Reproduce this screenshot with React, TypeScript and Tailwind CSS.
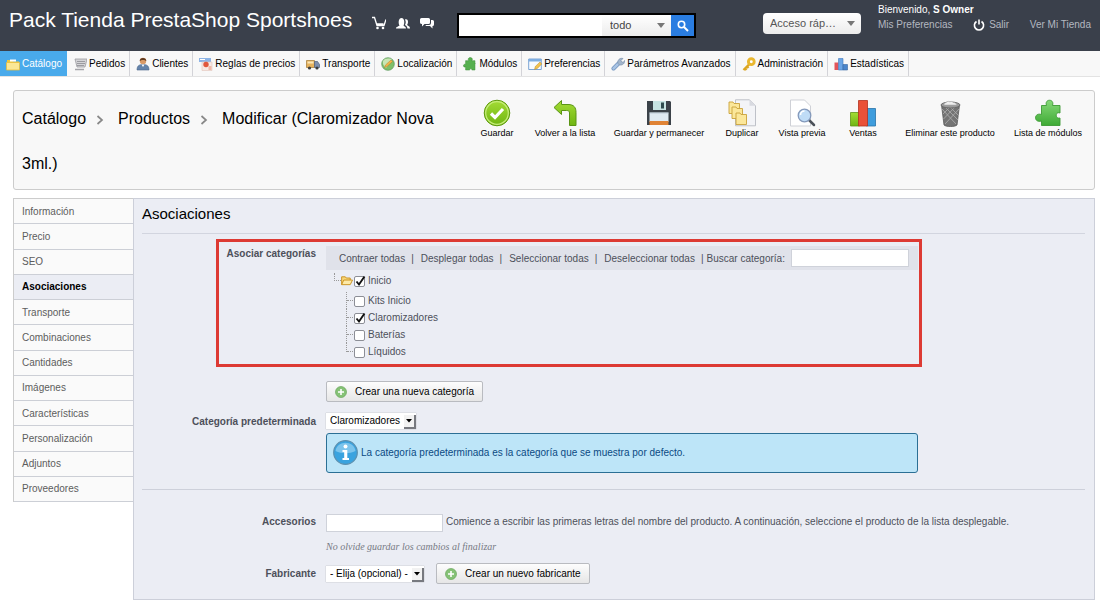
import type { ReactNode } from "react";

type IconName =
  | "folder" | "orders" | "customers" | "rules" | "truck" | "globe"
  | "puzzle" | "prefs" | "wrench" | "key" | "stats";

const PUZZLE = "M11 7c-2-2-1-6 3-6s5 4 3 6h6v6c2-2 0 0 0 0v12h-6c1-3-5-3-4 0H5v-6c-5 2-6-6 0-5V7z";

function NavIcon({ name }: { name: IconName }) {
  const art: Record<IconName, ReactNode> = {
    folder: (
      <>
        <path d="M1 3h5l1 1.500h6V6H1z" fill="#f0c83c" />
        <path d="M.5 5.500h13V13H.500z" fill="#fbe795" stroke="#e9bd3b" strokeWidth=".8" />
        <path d="M4 2.500h6v2H4z" fill="#fff" />
      </>
    ),
    orders: (
      <>
        <path d="M2 2h12l-2 8H4z" fill="#d5d5d8" stroke="#9a9aa0" strokeWidth=".8" />
        <path d="M4 4.500h8M4 6.500h8M4 8.500h7" stroke="#8b8b92" strokeWidth=".8" />
        <path d="M2 12.500h9" stroke="#a5a5aa" strokeWidth="1.500" />
      </>
    ),
    customers: (
      <>
        <circle cx="7" cy="4" r="3.200" fill="#d99a67" />
        <path d="M3.700 4C3.500 0 10.500 0 10.300 4 9 2.500 5 2.500 3.700 4z" fill="#5e3a1f" />
        <path d="M1 13c0-5 3-5.500 6-5.500s6 .5 6 5.500z" fill="#6584ab" stroke="#4a668c" strokeWidth=".6" />
        <path d="M5.500 7.500 7 10l1.500-2.500z" fill="#fff" />
      </>
    ),
    rules: (
      <>
        <path d="M0 1h12v4H0z" fill="#8db4e6" />
        <path d="M1 2.500h5" stroke="#fff" strokeWidth="1" />
        <path d="M3 5h10v8.500H3z" fill="#f7e9e4" stroke="#e3c4ba" strokeWidth=".6" />
        <circle cx="7" cy="7.500" r="2.700" fill="#e0573d" />
        <path d="M9.500 9h3v4h-3z" fill="#f1b9a8" />
      </>
    ),
    truck: (
      <>
        <path d="M.5 3.500h8v7h-8z" fill="#e6b25d" stroke="#a47832" strokeWidth=".7" />
        <path d="M1.500 4.500h6v2h-6z" fill="#fbe6b8" />
        <path d="M8.500 4.500h3l2 3v3h-5z" fill="#7d8fae" stroke="#4e5f7d" strokeWidth=".7" />
        <circle cx="3.500" cy="11" r="1.600" fill="#3c3c3c" />
        <circle cx="11" cy="11" r="1.600" fill="#3c3c3c" />
      </>
    ),
    globe: (
      <>
        <circle cx="7" cy="7" r="6.300" fill="#7fbf6b" stroke="#5b9a5f" strokeWidth=".7" />
        <path d="M2 4c2-3 7-3 9-1L5 11C2 9 1.500 6 2 4z" fill="#c8e6b5" />
        <path d="m3.500 10.500 1-2.500 5.500-5 1.500 1.500-5.500 5z" fill="#f2b54a" stroke="#b47b26" strokeWidth=".5" />
      </>
    ),
    puzzle: (
      <path d={PUZZLE} transform="scale(.52)" fill="#56b04f" stroke="#3d8e39" strokeWidth="1" />
    ),
    prefs: (
      <>
        <path d="M.7 2h12.600v10.500H.700z" fill="#f8fbff" stroke="#6d9bd0" strokeWidth=".9" />
        <path d="M.7 2h12.600v2.500H.700z" fill="#7eaee2" />
        <path d="m6.500 12.500.8-3 4.700-4.500 1.800 1.900-4.500 4.600z" fill="#f3c34e" stroke="#b98a2b" strokeWidth=".5" />
      </>
    ),
    wrench: (
      <>
        <path d="M2.500 11.500 8 6" stroke="#6f91bd" strokeWidth="4" strokeLinecap="round" />
        <path d="M2.500 11.500 8 6" stroke="#a8c3e3" strokeWidth="2.500" strokeLinecap="round" />
        <path d="M7 6.500C6 3 9 .5 12 1.500L10 3.500l.8 1.500 1.700.200 1-1.700c.5 3-2 5-5 4.500z" fill="#a3b6cc" stroke="#7188a5" strokeWidth=".6" />
      </>
    ),
    key: (
      <>
        <path d="M8 6.500 1.500 13M3 11.500l1.500 1.500M5 9.500 6.500 11" stroke="#dba520" strokeWidth="2.400" />
        <circle cx="9.300" cy="4.700" r="2.900" fill="#fff" stroke="#e9b72f" strokeWidth="2.900" />
      </>
    ),
    stats: (
      <>
        <path d="M.5 5.500h4V13h-4z" fill="#e2555a" />
        <path d="M4.500 1.500h4.500V13H4.500z" fill="#6aa5e6" stroke="#3f78bd" strokeWidth=".6" />
        <path d="M9 7.500h4.500V13H9z" fill="#4a86cc" stroke="#35659f" strokeWidth=".6" />
      </>
    ),
  };
  return (
    <svg viewBox="0 0 14 14" className="size-3.5 shrink-0" aria-hidden="true">
      {art[name]}
    </svg>
  );
}

const nav: { label: string; icon: IconName }[] = [
  { label: "Catálogo", icon: "folder" },
  { label: "Pedidos", icon: "orders" },
  { label: "Clientes", icon: "customers" },
  { label: "Reglas de precios", icon: "rules" },
  { label: "Transporte", icon: "truck" },
  { label: "Localización", icon: "globe" },
  { label: "Módulos", icon: "puzzle" },
  { label: "Preferencias", icon: "prefs" },
  { label: "Parámetros Avanzados", icon: "wrench" },
  { label: "Administración", icon: "key" },
  { label: "Estadísticas", icon: "stats" },
];

const sheet = "M0 0h14l6 6v20H0z";

const actions: { label: string; width: string; art: ReactNode }[] = [
  {
    label: "Guardar",
    width: "w-[50px]",
    art: (
      <>
        <circle cx="14" cy="14" r="12.800" fill="url(#lime)" stroke="#5f9a10" strokeWidth="1" />
        <circle cx="14" cy="14" r="11.300" fill="none" stroke="#c5ec7a" strokeWidth="1.200" />
        <path d="m8 14.500 4 4 8-8.500" fill="none" stroke="#fff" strokeWidth="3.200" />
      </>
    ),
  },
  {
    label: "Volver a la lista",
    width: "w-[86px]",
    art: (
      <path d="M3 8.500 10.500 1.500v4H17c6 0 8 3 8 8V26.500h-6.500V14c0-2-1-2.500-3-2.500h-5v4z" fill="url(#lime)" stroke="#5a9414" strokeWidth="1" />
    ),
  },
  {
    label: "Guardar y permanecer",
    width: "w-[102px]",
    art: (
      <>
        <path d="M2 2h23l1 1v23H2z" fill="#3b4249" />
        <path d="M8 2h13v9H8z" fill="#c7e3e2" />
        <path d="M16 3.500h3v6h-3z" fill="#2d4a4d" />
        <path d="M4.500 13.500h19V23h-19z" fill="#dfeaf2" />
        <path d="M4.500 14h19" stroke="#b5c4cf" strokeWidth=".8" />
        <path d="M4.500 22h19V26h-19z" fill="#e08335" />
      </>
    ),
  },
  {
    label: "Duplicar",
    width: "w-16",
    art: (
      <>
        <path d={sheet} transform="translate(7.500 .8)" fill="#f3f4f7" stroke="#b8bbc2" strokeWidth=".9" />
        <path d="M21.500.800v6h6z" fill="#d8dae0" />
        {[[1, 3], [4, 8], [8, 14]].map(([x, y]) => (
          <path key={x} d="M0 0h4l1 1.500h5.500v10H0z" transform={`translate(${x} ${y})`} fill="#fbe79a" stroke="#c9a23a" strokeWidth=".9" />
        ))}
      </>
    ),
  },
  {
    label: "Vista previa",
    width: "w-14",
    art: (
      <>
        <path d={sheet} transform="translate(2.500 1)" fill="#fff" stroke="#c9ccd2" strokeWidth=".9" />
        <path d="m21 21 5 5" stroke="#4c5159" strokeWidth="2.500" strokeLinecap="round" />
        <circle cx="16.500" cy="16.500" r="6.300" fill="#bfdcf6" stroke="#8499bb" strokeWidth="1.300" />
        <path d="M12.500 16a4 4 0 0 1 4-4" fill="none" stroke="#fff" strokeWidth="1.600" />
      </>
    ),
  },
  {
    label: "Ventas",
    width: "w-[66px]",
    art: (
      <>
        <path d="M1.500 13.500h9V27h-9z" fill="url(#lime)" stroke="#5f9318" strokeWidth=".8" />
        <path d="M17.500 9.500h9V27h-9z" fill="#3f9ddd" stroke="#2873a8" strokeWidth=".8" />
        <path d="M9.500 1.500h9V27h-9z" fill="#ea5138" stroke="#b3321f" strokeWidth=".8" />
      </>
    ),
  },
  {
    label: "Eliminar este producto",
    width: "w-[108px]",
    art: (
      <>
        <path d="M5.500 6h18l-2.500 20c-2 2-11 2-13 0z" fill="#747474" stroke="#5b5b5b" strokeWidth=".8" />
        <path d="m6 10 14 15M9 8l13 13M14 8l9 9M23 10 9 25M19 8 7.500 20M14 8l-7 7" stroke="#b0b0b0" strokeWidth=".8" />
        <ellipse cx="14.500" cy="6" rx="9.500" ry="3" fill="#9a9a9a" stroke="#666" strokeWidth=".9" />
        <path d="M8 6c0-3 3-2 4-4 2 2 4-1 5 1.500 2 0 4 1 3.500 2.500z" fill="#efefef" stroke="#aaa" strokeWidth=".6" />
      </>
    ),
  },
  {
    label: "Lista de módulos",
    width: "w-[88px]",
    art: (
      <path d="M7.500 6.500h5c-2.500-7 8.500-7 6 0h7.500v7.500c-5-2-5 6.500 0 5V26.500h-18.500V22c-8 2.500-8-9 0-6.500z" fill="url(#leaf)" stroke="#3c9a34" strokeWidth=".9" />
    ),
  },
];

const tabs = [
  "Información", "Precio", "SEO", "Asociaciones", "Transporte", "Combinaciones",
  "Cantidades", "Imágenes", "Características", "Personalización", "Adjuntos", "Proveedores",
];

const children = [
  { label: "Kits Inicio", checked: false },
  { label: "Claromizadores", checked: true },
  { label: "Baterías", checked: false },
  { label: "Líquidos", checked: false },
];

function Tick({ label, checked }: { label: string; checked: boolean }) {
  return (
    <label className="flex items-center gap-[3px]">
      <span className="relative flex pt-0.5">
        <input
          type="checkbox"
          defaultChecked={checked}
          className="peer size-[11px] appearance-none rounded-[2px] border border-[#8c8e96] bg-white"
        />
        <svg viewBox="0 0 12 12" className="pointer-events-none absolute top-px left-0 hidden size-3 peer-checked:block" aria-hidden="true">
          <path d="m2.500 6.500 2.500 3L10.500 1.500" fill="none" stroke="#111" strokeWidth="1.900" />
        </svg>
      </span>
      {label}
    </label>
  );
}

function OldSelect({ id, option, width }: { id: string; option: string; width: string }) {
  return (
    <span className={`relative flex ${width}`}>
      <select id={id} className="h-4 w-full appearance-none bg-white pl-1 text-[10px] leading-4 text-black shadow-[0_0_1px_#999]">
        <option>{option}</option>
      </select>
      <span className="pointer-events-none absolute right-0 bottom-0 flex h-3.5 w-3 items-center justify-center border-r-2 border-b-2 border-[#77797f] bg-[#f2f2f2]">
        <svg viewBox="0 0 6 4" className="h-1 w-1.5" aria-hidden="true"><path d="M0 0h6L3 3.500z" fill="#000" /></svg>
      </span>
    </span>
  );
}

function AddButton({ children: text }: { children: ReactNode }) {
  return (
    <button type="button" className="flex h-[21px] items-center gap-2 rounded-[2px] border border-[#b9bbc0] bg-linear-to-b from-[#fdfdfd] to-[#e6e6e6] px-2 text-[10px] text-black">
      <svg viewBox="0 0 12 12" className="size-3" aria-hidden="true">
        <circle cx="6" cy="6" r="5.500" fill="#86c276" stroke="#6aa85c" strokeWidth=".7" />
        <path d="M6 3v6M3 6h6" stroke="#fff" strokeWidth="1.600" />
      </svg>
      {text}
    </button>
  );
}

function Chevron() {
  return (
    <svg viewBox="0 0 8 10" className="mr-3.5 ml-2.5 inline h-2.5 w-2" aria-hidden="true">
      <path d="m1.500 1 4.500 4-4.500 4" fill="none" stroke="#888" strokeWidth="1.700" />
    </svg>
  );
}

const label = "shrink-0 pr-2.5 text-right font-bold text-[#4d505a]";
const field = "border border-[#cfd2da] bg-white px-1 text-[10px]";

export default function App() {
  return (
    <div className="min-h-screen bg-white font-['Liberation_Sans',Arial,sans-serif] text-[10px] leading-[15px] text-[#4d505a]">
      <svg className="absolute size-0" aria-hidden="true">
        <defs>
          <linearGradient id="lime" x1="0" y1="0" x2="0" y2="1">
            <stop offset="0" stopColor="#a4dc35" />
            <stop offset="1" stopColor="#6fb512" />
          </linearGradient>
          <linearGradient id="leaf" x1="0" y1="0" x2="0" y2="1">
            <stop offset="0" stopColor="#86d978" />
            <stop offset="1" stopColor="#3eaa35" />
          </linearGradient>
        </defs>
      </svg>

      <header className="flex h-[51px] items-start bg-[#3a404b] pr-[9px] pl-[9px] text-white">
        <h1 className="w-[363px] pt-2 text-[21px] leading-6 whitespace-nowrap">Pack Tienda PrestaShop Sportshoes</h1>
        <div className="flex w-[85px] gap-2.5 pt-4">
          <button type="button" aria-label="Pedidos nuevos">
            <svg viewBox="0 0 14 14" className="size-3.5"><path d="M0 1.500h2.500l2.500 8h7l2-6M4 8h7.500" fill="none" stroke="#fff" strokeWidth="1.300" /><circle cx="5.500" cy="12" r="1.300" fill="#fff" /><circle cx="11" cy="12" r="1.300" fill="#fff" /></svg>
          </button>
          <button type="button" aria-label="Clientes nuevos">
            <svg viewBox="0 0 14 14" className="size-3.5"><path d="M0 12.500c0-2 3-2 3.500-3C2 7 2.500 2 5.500 2S9 7 7.500 9.500c.5 1 2.500 1 2.500 3zM9 3.500c3-1.500 4 3 2 5.500 1 1 3 1 3 3.500h-2.500C11 10 10 9.500 9 9c1-2 1-3.500 0-5.500z" fill="#fff" /></svg>
          </button>
          <button type="button" aria-label="Mensajes nuevos">
            <svg viewBox="0 0 14 14" className="size-3.5"><path d="M1.500 2h7Q10 2 10 3.500v3Q10 8 8.500 8H4.500L2 10.500V8Q0 8 0 6.500v-3Q0 2 1.500 2z" fill="#fff" /><path d="M11 4h1.500Q14 4 14 5.500v3Q14 10 12.500 10v2.500L10 10H6.500Q5.500 10 5.500 9H9q2 0 2-2z" fill="#fff" /></svg>
          </button>
        </div>
        <form className="mt-[13px] flex h-[25px] w-[239px] border-2 border-black bg-white" onSubmit={(e) => e.preventDefault()}>
          <input type="search" aria-label="Buscar" className="w-0 grow px-1 text-[11px] text-black" />
          <span className="relative flex w-[69px]">
            <select aria-label="Buscar en" className="w-full appearance-none bg-linear-to-b from-white to-[#ececec] pl-2 text-[11px] text-[#444]">
              <option>todo</option>
            </select>
            <svg viewBox="0 0 8 5" className="pointer-events-none absolute top-2 right-1.5 h-[5px] w-2"><path d="M0 0h8L4 5z" fill="#777" /></svg>
          </span>
          <button type="submit" aria-label="Iniciar búsqueda" className="flex w-[23px] items-center justify-center bg-[#2a7de1]">
            <svg viewBox="0 0 12 12" className="size-3"><circle cx="4.500" cy="4.500" r="3.200" fill="none" stroke="#fff" strokeWidth="1.600" /><path d="m7 7 4 4" stroke="#fff" strokeWidth="2" /></svg>
          </button>
        </form>
        <span className="relative mt-[13px] ml-auto flex w-[98px]">
          <select aria-label="Acceso rápido" className="h-[21px] w-full appearance-none rounded bg-linear-to-b from-white to-[#ececec] pl-[7px] text-[11px] text-[#555]">
            <option>Acceso ráp…</option>
          </select>
          <svg viewBox="0 0 8 5" className="pointer-events-none absolute top-2 right-1.5 h-[5px] w-2"><path d="M0 0h8L4 5z" fill="#777" /></svg>
        </span>
        <div className="ml-[17px] w-[213px] pt-[3px]">
          <p className="leading-[14px]">Bienvenido, <strong>S Owner</strong></p>
          <div className="flex items-center justify-between text-[#b4b8c0]">
            <a href="#preferencias">Mis Preferencias</a>
            <a href="#salir" className="flex items-center gap-1">
              <svg viewBox="0 0 12 12" className="size-3"><path d="M3.500 2.500a4.600 4.600 0 1 0 5 0M6 .5v5" fill="none" stroke="#fff" strokeWidth="1.600" /></svg>
              Salir
            </a>
            <a href="#tienda">Ver Mi Tienda</a>
          </div>
        </div>
      </header>

      <nav className="flex h-[26px] border-b border-[#e3e3e3] bg-[#f8f8f8]">
        {nav.map(({ label: text, icon }, i) => (
          <a
            key={text}
            href="#menu"
            className={`flex items-center gap-0.5 border-r pr-1 pl-1.5 whitespace-nowrap ${i === 0 ? "border-[#49aaeb] bg-[#49aaeb] text-white" : "border-[#d3d3d8] text-black"}`}
          >
            <NavIcon name={icon} />
            {text}
          </a>
        ))}
      </nav>

      <div className="pt-[13px] pr-[5px] pb-3 pl-[13px]">
        <section className="flex min-h-[100px] rounded-[3px] border border-[#cccccc] bg-[#f8f8f8] pr-0.5 pl-2">
          <h2 className="min-w-0 grow pt-[5px] text-[16px] leading-[45px] text-black">
            <span>Catálogo</span>
            <Chevron />
            <span>Productos</span>
            <Chevron />
            <span>Modificar (Claromizador Nova</span> <span>3ml.)</span>
          </h2>
          <div className="flex shrink-0 pt-2">
            {actions.map((a) => (
              <a key={a.label} href="#accion" className={`flex h-10 flex-col items-center text-[9px] leading-3 whitespace-nowrap text-black ${a.width}`}>
                <svg viewBox="0 0 28 28" className="size-7" aria-hidden="true">{a.art}</svg>
                {a.label}
              </a>
            ))}
          </div>
        </section>

        <div className="mt-2 flex items-start">
          <nav className="grid h-76 w-[120px] shrink-0 grid-rows-12 border-t border-l border-[#cccccc]">
            {tabs.map((t) => (
              <a
                key={t}
                href="#pestana"
                className={`flex items-center border-b border-[#cccfd6] pl-2 ${t === "Asociaciones" ? "bg-[#ebedf4] font-bold text-black" : "bg-[#fafafa] text-[#5d5d5d]"}`}
              >
                {t}
              </a>
            ))}
          </nav>

          <main className="min-w-0 grow border border-[#cccfd9] bg-[#ebedf4] pr-[9px] pb-[15px] pl-2">
            <h3 className="pt-1.5 pb-2.5 text-[15px] leading-[18px] text-black">Asociaciones</h3>
            <hr className="border-[#d2d5df]" />

            <div className="mt-[5px] ml-[74px] flex min-h-32 w-[706px] border-3 border-[#dd3a33] pt-1 pr-px">
              <div className={`w-[107px] ${label}`}>Asociar categorías</div>
              <div className="grow">
                <div className="flex h-6 items-center bg-[#e0e2ea] pl-[13px] whitespace-nowrap">
                  {["Contraer todas", "Desplegar todas", "Seleccionar todas", "Deseleccionar todas"].map((t, i) => (
                    <span key={t} className="flex items-center">
                      <button type="button">{t}</button>
                      <span className={i < 3 ? "pr-[7px] pl-1.5" : "pr-[3px] pl-1.5"}>|</span>
                    </span>
                  ))}
                  <label htmlFor="buscar" className="pr-1.5">Buscar categoría:</label>
                  <input id="buscar" type="text" className={`mr-[9px] h-[18px] w-0 grow ${field}`} />
                </div>
                <div className="pt-0.5 pl-2">
                  <div className="flex h-[17px] items-center">
                    <span className="mb-2 h-2 w-[7px] border-b border-l border-dotted border-[#999]" />
                    <svg viewBox="0 0 13 11" className="mr-px h-[11px] w-3" aria-hidden="true">
                      <path d="M.7 10V1.500h4l1 1.300h4.300V5" fill="#f8d678" stroke="#c98f1c" />
                      <path d="M.7 10 3 5h9.500L10 10z" fill="#fdeaa8" stroke="#c98f1c" />
                    </svg>
                    <Tick label="Inicio" checked />
                  </div>
                  <ul className="pt-[3px] pl-3">
                    {children.map((c, i) => (
                      <li key={c.label} className="flex h-[17px] items-center">
                        <span className={`w-px border-l border-dotted border-[#999] ${i === 3 ? "h-[9px] self-start" : "h-full"}`} />
                        <span className="mr-px w-1.5 border-t border-dotted border-[#999]" />
                        <Tick label={c.label} checked={c.checked} />
                      </li>
                    ))}
                  </ul>
                </div>
              </div>
            </div>

            <div className="mt-3.5 flex pl-[184px]">
              <AddButton>Crear una nueva categoría</AddButton>
            </div>
            <div className="mt-[11px] flex items-center">
              <label htmlFor="categoria" className={`w-[184px] ${label}`}>Categoría predeterminada</label>
              <OldSelect id="categoria" option="Claromizadores" width="w-[90px]" />
            </div>
            <div className="mt-1 ml-[184px] flex h-10 w-[592px] items-center gap-[3px] rounded-[3px] border border-[#2b6f95] bg-[#bde5f8] pb-px pl-1.5 text-[#0b4a83]">
              <svg viewBox="0 0 25 25" className="size-[25px]" aria-hidden="true">
                <circle cx="12.500" cy="12.500" r="11.800" fill="#3aa3df" stroke="#5b8fae" strokeWidth="1.200" />
                <path d="M2.500 11C4 0 21 0 22.500 11 16 14 9 14 2.500 11z" fill="#7cc4ec" />
                <circle cx="12.500" cy="6.500" r="2" fill="#fff" />
                <path d="M9.500 10h4.800v8h1.700v2H9.500v-2h1.700v-6H9.500z" fill="#fff" />
              </svg>
              La categoría predeterminada es la categoría que se muestra por defecto.
            </div>
            <hr className="mt-4 border-[#cdd0da]" />

            <div className="mt-6 flex items-start">
              <label htmlFor="accesorios" className={`w-[184px] ${label}`}>Accesorios</label>
              <input id="accesorios" type="text" className={`h-[18px] w-[117px] shrink-0 ${field}`} />
              <span className="pl-[3px]">Comience a escribir las primeras letras del nombre del producto. A continuación, seleccione el producto de la lista desplegable.</span>
            </div>
            <p className="mt-[7px] pl-[184px] font-['Liberation_Serif',Georgia,serif] text-[10px] text-[#777a84] italic">No olvide guardar los cambios al finalizar</p>
            <div className="mt-[9px] flex items-center">
              <label htmlFor="fabricante" className={`w-[184px] ${label}`}>Fabricante</label>
              <OldSelect id="fabricante" option="- Elija (opcional) -" width="w-[98px]" />
              <span className="pl-3"><AddButton>Crear un nuevo fabricante</AddButton></span>
            </div>
          </main>
        </div>
      </div>
    </div>
  );
}
